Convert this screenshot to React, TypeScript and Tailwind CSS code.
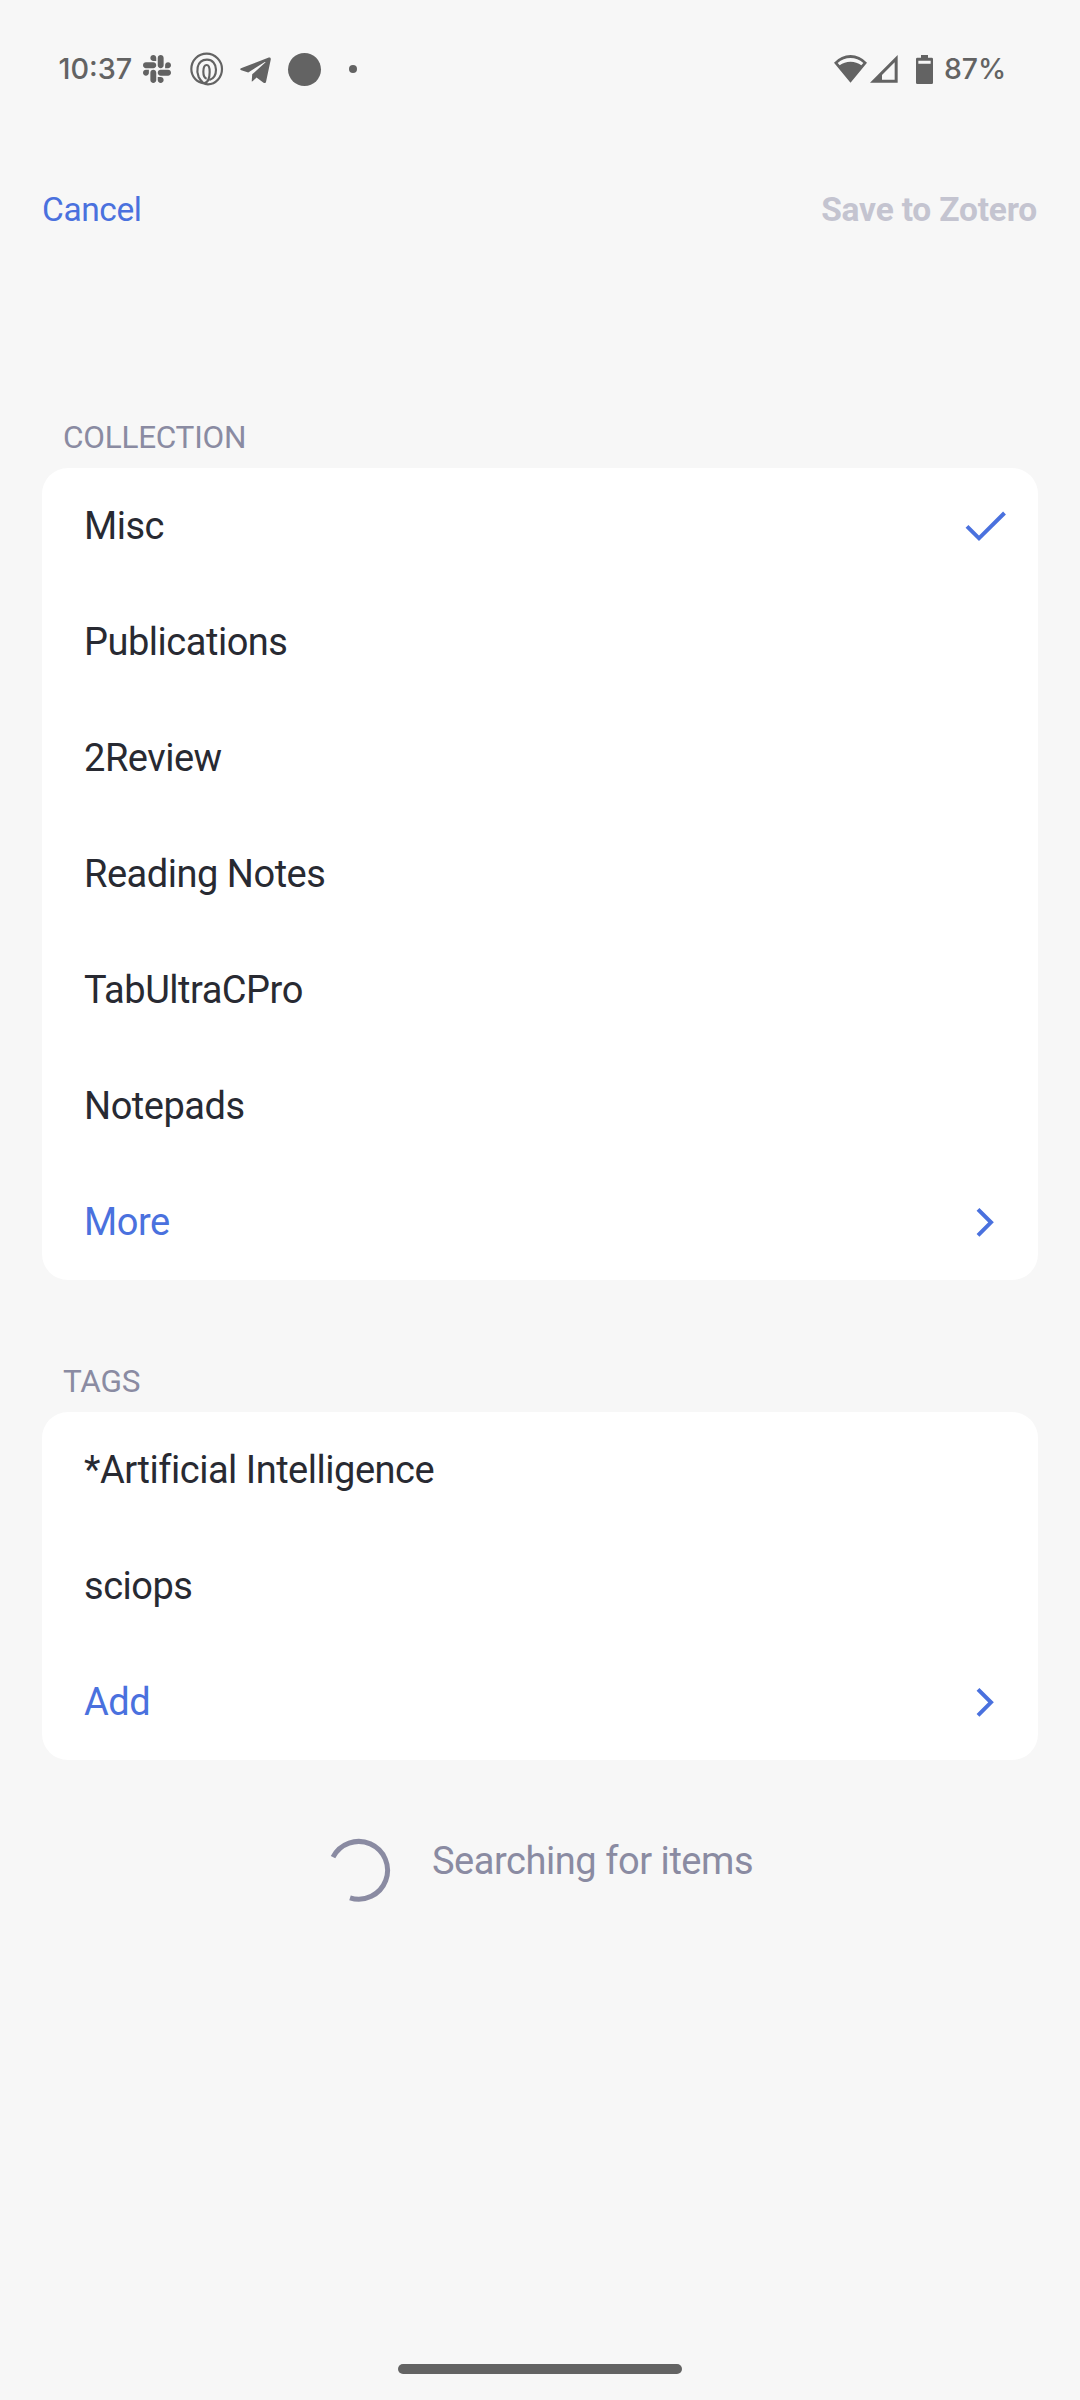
import React from "react";
import { FaSlack, FaTelegramPlane } from "react-icons/fa";

function SpiralIcon() {
  return (
    <svg className="h-[34px] w-[34px]" viewBox="0 0 102 102" fill="none" stroke="currentColor" strokeWidth="6.500">
      <path d="M42 94C19 90 4 73 4 51C4 24 25 5 50 5S96 26 96 51S77 97 54 97C43 97 32 87 26 75C22 66 21 55 23 46C26 32 36 23 51 23C67 23 78 35 78 53C78 69 70 80 58 84" />
      <path d="M42 94C54 92 59 76 59 60C59 47 56 39 50 39S40 47 40 59C40 69 43 78 50 80" />
    </svg>
  );
}

function WifiIcon() {
  return (
    <svg className="h-[28px] w-[33px]" viewBox="42 43 99 84" fill="currentColor">
      <path d="M91.500 126L42 66Q64 43 91.500 43T141 66ZM53 67L59 74Q73 63 91.500 63T124 74L130 67Q113 52 91.500 52T53 67Z" fillRule="evenodd" />
    </svg>
  );
}

function SignalIcon() {
  return (
    <svg className="h-[28px] w-[28px]" viewBox="150 44 84 84" fill="currentColor">
      <path d="M150 127L233 44V127ZM186 118H224V66L186 104Z" fillRule="evenodd" />
    </svg>
  );
}

function BatteryIcon() {
  return (
    <svg className="h-[29px] w-[17px]" viewBox="288 42 51 87" fill="currentColor">
      <path d="M303 42H324V50H335Q339 50 339 54V125Q339 129 335 129H292Q288 129 288 125V54Q288 50 292 50H303ZM295 59V68H332V59Z" fillRule="evenodd" />
    </svg>
  );
}

function CheckIcon() {
  return (
    <svg className="mr-[29px] h-[32px] w-[46px]" viewBox="0 0 46 32" fill="none" stroke="currentColor" strokeWidth="4">
      <path d="M4 16.300L16 28.300L41.500 3" />
    </svg>
  );
}

function ChevronIcon() {
  return (
    <svg className="mr-[42px] h-[32px] w-[20px]" viewBox="0 0 20 32" fill="none" stroke="currentColor" strokeWidth="4">
      <path d="M2 3.300L15 16.300L2 29.300" />
    </svg>
  );
}

type RowProps = { label: string; checked?: boolean; action?: boolean };

function Row({ label, checked, action }: RowProps) {
  return (
    <div
      className={
        action
          ? "flex h-[116px] items-center justify-between pl-[42px] text-[#4a71de]"
          : "flex h-[116px] items-center justify-between pl-[42px] text-[#282a32]"
      }
    >
      <span>{label}</span>
      {checked && (
        <span className="text-[#4a71de]">
          <CheckIcon />
        </span>
      )}
      {action && <ChevronIcon />}
    </div>
  );
}

function Section({ title, rows }: { title: string; rows: RowProps[] }) {
  return (
    <section className="px-[42px]">
      <h2 className="flex h-[62px] items-center pt-[1.500px] pl-[21px] text-[31.500px] leading-none tracking-[-0.240px] text-[#8a8ba2]">{title}</h2>
      <div className="rounded-[26px] bg-white text-[38px] leading-none tracking-[-0.480px] [font-variant-ligatures:common-ligatures]">
        {rows.map((row) => (
          <Row key={row.label} {...row} />
        ))}
      </div>
    </section>
  );
}

const collections: RowProps[] = [
  { label: "Misc", checked: true },
  { label: "Publications" },
  { label: "2Review" },
  { label: "Reading Notes" },
  { label: "TabUltraCPro" },
  { label: "Notepads" },
  { label: "More", action: true },
];

const tags: RowProps[] = [
  { label: "*Artificial Intelligence" },
  { label: "sciops" },
  { label: "Add", action: true },
];

export default function App() {
  return (
    <div className="flex h-[2400px] w-[1080px] flex-col bg-[#f7f7f7] font-[Roboto,sans-serif]">
      <div className="flex h-[138px] items-center justify-between pr-[75px] pl-[58.500px] text-[#636363]">
        <div className="flex items-center">
          <span className="w-[84px] font-[Inter,sans-serif] text-[28.800px] leading-none font-medium">10:37</span>
          <FaSlack className="ml-[-1.500px] h-[32px] w-[32px]" />
          <span className="ml-[17px]">
            <SpiralIcon />
          </span>
          <FaTelegramPlane className="mt-[2px] ml-[16px] h-[35px] w-[31px]" />
          <span className="ml-[17px] h-[33px] w-[33px] rounded-full bg-[#636363]" />
          <span className="ml-[28px] h-[8px] w-[8px] rounded-full bg-[#636363]" />
        </div>
        <div className="flex items-center">
          <WifiIcon />
          <span className="ml-[3px]">
            <SignalIcon />
          </span>
          <span className="ml-[18px]">
            <BatteryIcon />
          </span>
          <span className="ml-[11px] w-[61px] font-[Inter,sans-serif] text-[28.400px] leading-none font-medium">87%</span>
        </div>
      </div>

      <header className="flex h-[144px] items-center justify-between pr-[43px] pb-[0.500px] pl-[42px] text-[33.500px] leading-none">
        <button className="tracking-[-0.400px] text-[#4a71de]">Cancel</button>
        <button className="font-bold tracking-[-0.200px] text-[#c4c4d0]">Save to Zotero</button>
      </header>

      <main className="mt-[124px] flex flex-col gap-[70px]">
        <Section title="COLLECTION" rows={collections} />
        <Section title="TAGS" rows={tags} />
      </main>

      <div className="mt-[78px] flex h-[64px] items-start pl-[327px] text-[#8a8ba2]">
        <svg className="h-[64px] w-[64px]" viewBox="0 0 64 64" fill="none" stroke="currentColor" strokeWidth="5">
          <path d="M6 19.200A28.850 28.850 0 1 1 23 59.800" />
        </svg>
        <span className="mt-[4px] ml-[41px] text-[38px] leading-none tracking-[-0.450px]">Searching for items</span>
      </div>

      <div className="mt-auto mb-[26px] flex justify-center">
        <div className="h-[10px] w-[284px] rounded-full bg-[#636363]" />
      </div>
    </div>
  );
}
